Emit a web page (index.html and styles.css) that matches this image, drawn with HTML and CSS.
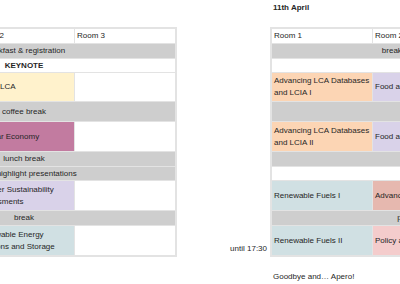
FILE: index.html
```html
<!DOCTYPE html>
<html lang="en">
<head>
<meta charset="utf-8">
<title>Conference schedule</title>
<link rel="stylesheet" href="styles.css">
</head>
<body>
<div class="days">
  <section class="day">
    <h2 class="day-title">10th April</h2>
    <div class="day-body">
      <div class="times"></div>
      <div class="sched">
        <div class="cell">Room 1</div>
        <div class="cell">Room 2</div>
        <div class="cell">Room 3</div>
        <div class="cell span gray">breakfast &amp; registration</div>
        <div class="cell span key">KEYNOTE</div>
        <div class="cell c-peach">Life Cycle Inventory</div>
        <div class="cell c-yellow">Social LCA</div>
        <div class="cell"></div>
        <div class="cell span gray">coffee break</div>
        <div class="cell c-blue">LCA Methods</div>
        <div class="cell c-magenta">Circular Economy</div>
        <div class="cell"></div>
        <div class="cell span gray">lunch break</div>
        <div class="cell span gray">Poster highlight presentations</div>
        <div class="cell c-peach">Buildings and Construction</div>
        <div class="cell c-lavender">Broader Sustainability Assessments</div>
        <div class="cell"></div>
        <div class="cell span gray">break</div>
        <div class="cell c-pink">Policy and Decision Making</div>
        <div class="cell c-blue">Renewable Energy Solutions and Storage</div>
        <div class="cell"></div>
      </div>
    </div>
  </section>

  <section class="day">
    <h2 class="day-title">11th April</h2>
    <div class="day-body">
      <div class="times"><span>until 17:30</span></div>
      <div class="sched">
        <div class="cell">Room 1</div>
        <div class="cell">Room 2</div>
        <div class="cell">Room 3</div>
        <div class="cell span gray">breakfast &amp; registration</div>
        <div class="cell span"></div>
        <div class="cell c-peach">Advancing LCA Databases and LCIA I</div>
        <div class="cell c-lavender">Food and Agriculture I</div>
        <div class="cell"></div>
        <div class="cell span gray"></div>
        <div class="cell c-peach">Advancing LCA Databases and LCIA II</div>
        <div class="cell c-lavender">Food and Agriculture II</div>
        <div class="cell"></div>
        <div class="cell span gray"></div>
        <div class="cell span"></div>
        <div class="cell c-blue">Renewable Fuels I</div>
        <div class="cell c-salmon">Advances in Modelling</div>
        <div class="cell"></div>
        <div class="cell span gray">poster session</div>
        <div class="cell c-blue">Renewable Fuels II</div>
        <div class="cell c-pink">Policy and LCA</div>
        <div class="cell"></div>
      </div>
    </div>
    <p class="note">Goodbye and… Apero!</p>
  </section>
</div>
</body>
</html>
```

FILE: styles.css
```css
* {
  box-sizing: border-box;
}

html, body {
  margin: 0;
  padding: 0;
  background: #ffffff;
}

body {
  font-family: "Liberation Sans", Arial, sans-serif;
  font-size: 8px;
  color: #262626;
  overflow: hidden;
}

.days {
  display: flex;
  gap: 33px;
  margin-left: -189px;
  width: max-content;
}

.day {
  display: flex;
  flex-direction: column;
}

.day-title {
  margin: 0 0 13px;
  padding: 2px 0 0 63px;
  font-size: 8px;
  line-height: 12px;
  font-weight: 700;
}

.day-body {
  display: flex;
}

.times {
  width: 60px;
  display: flex;
  flex-direction: column;
  justify-content: flex-end;
  align-items: flex-end;
  padding: 0 3px 2px 0;
  line-height: 12px;
}

.sched {
  display: grid;
  grid-template-columns: repeat(3, 100px);
  grid-template-rows: 14px 14px 13px 28px 19px 29px 14px 13px 29px 14px 29px;
  gap: 1px;
  padding: 2px;
  background: #e3e3e3;
}

.cell {
  background: #ffffff;
  display: flex;
  align-items: center;
  padding: 0 2px;
  line-height: 12px;
  overflow: hidden;
}

.span {
  grid-column: 1 / -1;
  justify-content: center;
  text-align: center;
}

.key {
  font-weight: 700;
}

.gray { background: #cecece; }
.c-yellow { background: #fff2cc; }
.c-magenta { background: #c27ba0; }
.c-lavender { background: #d9d2e9; }
.c-blue { background: #d0e0e3; }
.c-peach { background: #fcd5b4; }
.c-salmon { background: #e6b8af; }
.c-pink { background: #f4cccc; }

.note {
  margin: 14px 0 0;
  padding-left: 63px;
  line-height: 12px;
}
```
